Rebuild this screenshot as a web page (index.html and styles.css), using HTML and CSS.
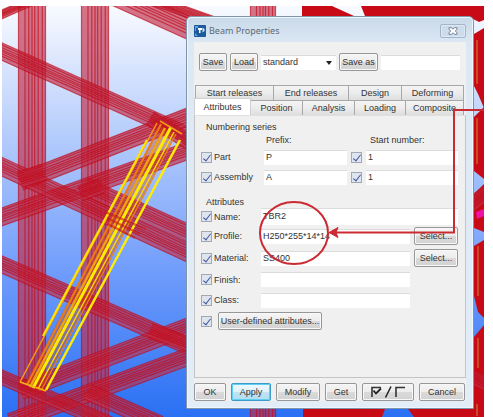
FILE: index.html
```html
<!DOCTYPE html>
<html lang="en">
<head>
    <meta charset="UTF-8">
    <meta name="viewport" content="width=device-width, initial-scale=1.0">
    <title>Beam Properties</title>
    <link rel="stylesheet" href="styles.css">
</head>
<body>
    <main class="scene">
        <svg class="model" viewBox="2 6 482 411" preserveAspectRatio="xMidYMin slice" aria-hidden="true">
            <!-- dense parts of the frame on the far side -->
            <g fill="#c80a16">
                <path d="M361 6h123v14l-5 2-6-3-108-3z"/>
                <path d="M302 6h30l22 10h-52z"/>
                <path d="M474 34l10-6v80l-6-14-4-8z"/>
                <path d="M474 117l10-10v72l-10-8z"/>
                <path d="M474 194l10-10v48l-10-4z"/>
                <path d="M474 246l10-6v78l-6-6-4-16z"/>
                <path d="M474 337l10-12v92h-10z"/>
                <path d="M303 417v-8h82l-3 8zM414 417l-6-8h76v8z"/>
            </g>
            <g id="beams"></g>
            <g fill="none" stroke="#c98a3c">
                <path d="M477 40v44M477 118v46M478 246v50M478 338v30M477 404v12"/>
            </g>
            <path d="M476 212l8-3v7l-7 3z" fill="#f012a8"/>
            <g id="selected"></g>
        </svg>

        <form class="dialog">
            <header class="titlebar">
                <svg class="app-icon" viewBox="0 0 12 12" aria-hidden="true">
                    <rect width="12" height="12" rx="1" fill="#1d5a9c"/>
                    <path d="M1 1h3v2H2v3H1zM1 8l3 3H1z" fill="#5fa4dc"/>
                    <path d="M4 3h4v2H6.500v3H5V5H4z" fill="#fff"/>
                    <path d="M8.500 2.500l2 1.500v2l-2 1.500z" fill="#cfe6f8"/>
                </svg>
                <h1>Beam Properties</h1>
                <button type="button" class="close" aria-label="Close">
                    <svg viewBox="0 0 10 8" aria-hidden="true">
                        <path d="M1 .7h2.500L5 2.200 6.500.7H9v1.500L7.300 4 9 5.800v1.500H6.500L5 5.800 3.500 7.300H1V5.800L2.700 4 1 2.200z" fill="#fff" stroke="#66788c" stroke-width=".9"/>
                    </svg>
                </button>
            </header>

            <div class="client">
                <div class="toolbar">
                    <button type="button">Save</button>
                    <button type="button">Load</button>
                    <div class="combo">
                        <select aria-label="Settings file"><option>standard</option></select>
                    </div>
                    <button type="button">Save as</button>
                    <input type="text" aria-label="Save as name">
                </div>

                <div class="tabs back">
                    <button type="button">Start releases</button>
                    <button type="button">End releases</button>
                    <button type="button">Design</button>
                    <button type="button">Deforming</button>
                </div>
                <div class="tabs front">
                    <button type="button" class="active">Attributes</button>
                    <button type="button">Position</button>
                    <button type="button">Analysis</button>
                    <button type="button">Loading</button>
                    <button type="button">Composite</button>
                </div>

                <div class="panel">
                    <h2>Numbering series</h2>
                    <div class="numbering">
                        <span class="prefix-head">Prefix:</span>
                        <span class="start-head">Start number:</span>

                        <label><input type="checkbox" checked>Part</label>
                        <input type="text" value="P" aria-label="Part prefix">
                        <input type="checkbox" checked aria-label="Use part start number">
                        <input type="text" value="1" aria-label="Part start number">

                        <label><input type="checkbox" checked>Assembly</label>
                        <input type="text" value="A" aria-label="Assembly prefix">
                        <input type="checkbox" checked aria-label="Use assembly start number">
                        <input type="text" value="1" aria-label="Assembly start number">
                    </div>

                    <h2>Attributes</h2>
                    <div class="attributes">
                        <label><input type="checkbox" checked>Name:</label>
                        <input type="text" class="wide" value="TBR2" aria-label="Name">

                        <label><input type="checkbox" checked>Profile:</label>
                        <input type="text" value="H250*255*14*14" aria-label="Profile">
                        <button type="button">Select...</button>

                        <label><input type="checkbox" checked>Material:</label>
                        <input type="text" value="SS400" aria-label="Material">
                        <button type="button">Select...</button>

                        <label><input type="checkbox" checked>Finish:</label>
                        <input type="text" aria-label="Finish">
                        <span></span>

                        <label><input type="checkbox" checked>Class:</label>
                        <input type="text" aria-label="Class">
                        <span></span>
                    </div>
                    <div class="user-defined">
                        <input type="checkbox" checked aria-label="Use user-defined attributes">
                        <button type="button">User-defined attributes...</button>
                    </div>
                </div>

                <footer class="actions">
                    <button type="button">OK</button>
                    <button type="button" class="default">Apply</button>
                    <button type="button">Modify</button>
                    <button type="button">Get</button>
                    <button type="button" aria-label="Toggle all">
                        <svg viewBox="0 0 36 12" aria-hidden="true">
                            <path d="M2 11V1.500h9M26 11V1.500h9" fill="none" stroke="#333" stroke-width="1.600"/>
                            <path d="M3.500 4.500l2.500 3 5-5" fill="none" stroke="#222" stroke-width="1.800"/>
                            <path d="M15.500 11.500L21 .5" stroke="#222" stroke-width="1.600"/>
                        </svg>
                    </button>
                    <button type="button">Cancel</button>
                </footer>
            </div>
        </form>

        <svg class="markup" viewBox="2 6 482 411" preserveAspectRatio="xMaxYMin meet" aria-hidden="true">
            <ellipse cx="294" cy="233" rx="34" ry="31"/>
            <path d="M485 110H454V232.500H334"/>
            <path class="head" d="M329 232.500l9-5-2 5 2 5z"/>
        </svg>
    </main>

    <script src="script.js"></script>
</body>
</html>
```
FILE: styles.css
```css
* {
    box-sizing: border-box;
}

body {
    margin: 0;
    padding: 6px 9px 0 2px;
    background: #fff;
    font-family: "Liberation Sans", Arial, sans-serif;
    font-size: 9px;
    line-height: 12px;
    color: #333;
}

.scene {
    position: relative;
    padding: 10px 10px 8px 184px;
    overflow: hidden;
    background: linear-gradient(#f8faff, #b4ccfc 32%, #719dfb 64%, #2a70f4);
}

.model,
.markup {
    position: absolute;
    top: 0;
    left: 0;
    width: 100%;
    height: 100%;
}

.markup {
    pointer-events: none;
    fill: none;
    stroke: #cb2a32;
    stroke-width: 2;
}

.markup .head {
    fill: #cb2a32;
    stroke-width: 1;
}

.dialog {
    position: relative;
    padding: 0 7px 7px;
    border: 1px solid #8295a8;
    border-radius: 5px 5px 1px 1px;
    background: linear-gradient(#c9d9e8, #dce8f4 26px, #e2edf8);
    box-shadow: inset 0 0 0 1px #eef6fd;
}

h1,
h2 {
    margin: 0;
    font-size: 9px;
    font-weight: normal;
}

button,
input,
select {
    margin: 0;
    font: inherit;
    color: inherit;
}

button {
    height: 18px;
    padding: 0;
    border: 1px solid #979797;
    border-radius: 2px;
    background: linear-gradient(#f5f5f5, #ececec 50%, #dadada 50%, #d2d2d2);
    box-shadow: inset 0 0 0 1px #f8f8f8;
    white-space: nowrap;
}

input[type="text"],
select {
    width: 100%;
    min-width: 0;
    height: 15px;
    padding: 0 2px 2px;
    border: 0;
    border-top: 1px solid #dcdcdc;
    border-radius: 0;
    background: #fff;
}

input[type="checkbox"] {
    flex: none;
    appearance: none;
    position: relative;
    width: 11px;
    height: 11px;
    border: 1px solid #a3a9b2;
    background: #dfe5ef;
}

input[type="checkbox"]:checked::after {
    content: "";
    position: absolute;
    left: 3px;
    top: 0;
    width: 3px;
    height: 7px;
    border: solid #43579c;
    border-width: 0 1px 1px 0;
    transform: rotate(38deg);
}

label {
    display: flex;
    align-items: center;
    gap: 2px;
}

.titlebar {
    display: flex;
    align-items: center;
    gap: 3px;
    height: 25px;
    padding-top: 2px;
}

.titlebar h1 {
    flex: 1;
    font-family: "Noto Sans", sans-serif;
    color: #5d6975;
}

.app-icon {
    width: 12px;
    height: 12px;
}

.close {
    display: grid;
    place-items: center;
    width: 26px;
    height: 14px;
    border-color: #a3b5c8;
    background: #cddbea;
    box-shadow: inset 0 0 0 1px #dce8f4;
}

.close svg {
    width: 10px;
    height: 8px;
}

.client {
    background: #f0f0f0;
}

.toolbar {
    display: grid;
    grid-template-columns: 28px 28px 75px 39px 1fr;
    align-items: center;
    gap: 3px;
    padding: 11px 6px 14px 5px;
}

.combo {
    position: relative;
}

.combo select {
    display: block;
    appearance: none;
}

.combo::after {
    content: "";
    position: absolute;
    right: 4px;
    top: 6px;
    border: 3px solid transparent;
    border-top: 4px solid #222;
    border-bottom: 0;
}

.tabs {
    display: grid;
    padding-right: 2px;
}

.tabs.back {
    grid-template-columns: 79px 75px 53px 1fr;
    padding-left: 1px;
}

.tabs.front {
    grid-template-columns: 57px 52px 52px 51px 1fr;
}

.tabs button {
    height: 15px;
    border-color: #a8a8a8;
    border-left-width: 0;
    border-bottom: 0;
    border-radius: 0;
    background: linear-gradient(#f4f4f4, #ececec 50%, #dedede);
    box-shadow: none;
}

.tabs button:first-child {
    border-left-width: 1px;
}

.tabs .active {
    height: 17px;
    margin-top: -2px;
    border-color: #d0d0d0;
    background: #fff;
}

.panel {
    padding: 5px 7px 47px 6px;
    border: 1px solid #c4c4c4;
    border-top-color: #e0e0e0;
}

.panel h2 {
    padding-left: 5px;
}

.numbering {
    display: grid;
    grid-template-columns: 59px 83px 11px 1fr;
    grid-template-rows: 14px 20px 20px;
    align-items: center;
    column-gap: 4px;
    padding-bottom: 9px;
}

.prefix-head {
    grid-column: 2;
    padding-left: 2px;
}

.start-head {
    grid-column: 4;
    padding-left: 4px;
}

.attributes {
    display: grid;
    grid-template-columns: 56px 1fr 44px;
    grid-template-rows: 17px 22px 22px 21px 20px;
    align-items: center;
    column-gap: 4px;
}

.attributes .wide {
    grid-column: 2 / 4;
    height: 17px;
}

.user-defined {
    display: flex;
    align-items: center;
    gap: 6px;
    padding-top: 2px;
}

.user-defined button {
    width: 104px;
}

.actions {
    display: grid;
    grid-template-columns: 32px 40px 44px 32px 52px 1fr;
    gap: 5px;
    padding: 5px 1px 0 0;
}

.actions svg {
    display: block;
    width: 36px;
    height: 12px;
    margin: 0 auto;
}

.actions .default {
    border-color: #3c9cc8;
    background: linear-gradient(#eef8fd, #dff2fb 50%, #bfe3f4 50%, #b4dcf0);
    box-shadow: inset 0 0 0 1px #5fd0f5;
}
```
FILE: script.js
```js
// Each beam: centre line x1, y1, x2, y2 and width across
const beams = [
    [32, 0, 32, 420, 27],
    [95, 0, 95, 420, 27],
    [263, 0, 263, 420, 25],
    [-4, 17, 30, 2, 8],
    [105, -10, 200, 33, 22],
    [130, -8, 220, 24, 10],
    [-4, 49, 190, 136, 16],
    [20, 182, 190, 116, 17],
    [-4, 219, 190, 150, 17],
    [-4, 164, 190, 254, 17],
    [84, 186, 190, 234, 17],
    [-4, 262, 190, 347, 16],
    [20, 391, 190, 326, 17],
    [10, 422, 190, 356, 17],
    [-4, 375, 120, 428, 14],
    [88, 392, 160, 424, 16],
    [150, 118, 190, 143, 14],
    [20, 180, 44, 172, 16],
    [80, 194, 102, 186, 14],
    [150, 330, 190, 345, 14],
    [470, 206, 490, 190, 14],
    [470, 376, 490, 386, 14]
];

// Yellow edges of the selected brace: x1, y1, x2, y2, stroke width, colour
const edges = [
    [157, 123, 20, 382, 1.5, '#f59a12'],
    [147, 140, 43, 336, 2.2, '#ffe500'],
    [161, 124, 27, 385, 2, '#ee7a10'],
    [165, 128, 30, 387, 2.5, '#f2a010'],
    [171, 127, 33, 388, 3, '#ffec00'],
    [174, 132, 38, 389, 1.5, '#ffd800'],
    [176, 134, 42, 389, 1.2, '#f08010'],
    [180, 140, 46, 390, 2.5, '#ffee00'],
    [160, 121, 182, 134, 1.5, '#f59a12'],
    [20, 382, 46, 391, 1.5, '#f5b512']
];

function addLine(parent, x1, y1, x2, y2, width, color, opacity) {
    const line = document.createElementNS('http://www.w3.org/2000/svg', 'line');
    line.setAttribute('x1', x1);
    line.setAttribute('y1', y1);
    line.setAttribute('x2', x2);
    line.setAttribute('y2', y2);
    line.setAttribute('stroke', color);
    line.setAttribute('stroke-width', width);
    line.setAttribute('stroke-opacity', opacity);
    parent.appendChild(line);
}

const beamGroup = document.getElementById('beams');
beams.forEach(function([x1, y1, x2, y2, width]) {
    const length = Math.hypot(x2 - x1, y2 - y1);
    const nx = -(y2 - y1) / length;
    const ny = (x2 - x1) / length;

    addLine(beamGroup, x1, y1, x2, y2, width, '#c02c48', 0.65);
    // Flange edges on the outside, web lines towards the middle
    [-0.5, -0.38, -0.23, -0.1, 0, 0.12, 0.26, 0.5].forEach(function(t) {
        const dx = nx * width * t;
        const dy = ny * width * t;
        addLine(beamGroup, x1 + dx, y1 + dy, x2 + dx, y2 + dy, 1.2, '#c00814', 0.65);
    });
});

const selected = document.getElementById('selected');
addLine(selected, 168, 130, 33, 387, 17, '#d04a18', 0.4);
edges.forEach(function(edge) {
    addLine(selected, ...edge, 1);
});
// Beams that cross in front of the selection
[[105, 212, 146, 229], [107, 218, 140, 234], [108, 224, 135, 238]].forEach(function(cut) {
    addLine(selected, ...cut, 2, '#c81a10', 0.6);
});
```
